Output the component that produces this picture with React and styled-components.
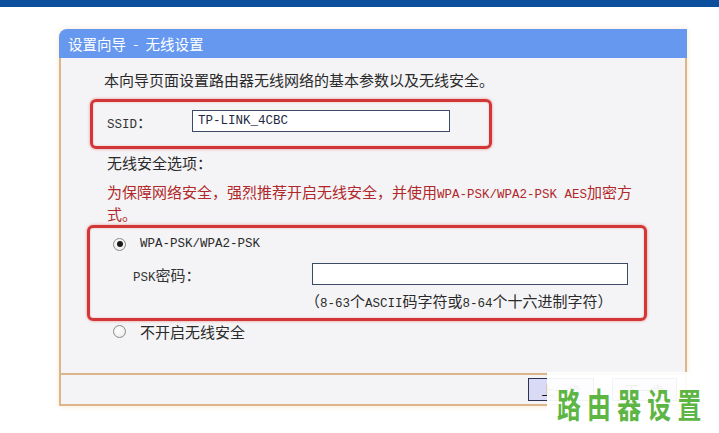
import React from "react";
import styled, { createGlobalStyle } from "styled-components";

const Global = createGlobalStyle`
  html, body { margin: 0; padding: 0; background: #ffffff; }
  body { font-family: "Noto Sans CJK SC", "Liberation Sans", sans-serif; }
`;

const Page = styled.div`
  position: relative;
  width: 719px;
  height: 433px;
  overflow: hidden;
  background: #ffffff;
`;

const TopBar = styled.div`
  height: 7px;
  background: #0c4f9c;
`;

const Panel = styled.div`
  margin: 22px 0 0 59px;
  width: 628px;
  box-shadow: 0 0 5px rgba(235, 195, 145, 0.45);
  border-top-left-radius: 8px;
`;

const Header = styled.div`
  height: 29px;
  display: flex;
  align-items: center;
  padding-left: 9px;
  background: #6698ef;
  color: #ffffff;
  font-size: 14.5px;
  border-top-left-radius: 8px;
  white-space: pre;
  word-spacing: 4px;
`;

const Body = styled.div`
  border-left: 2px solid #dcb58a;
  border-right: 2px solid #dcb58a;
  background: #f4f4f6;
  height: 315px;
  padding-top: 11px;
  box-sizing: border-box;
  color: #2a2a2a;
  font-size: 15px;
`;

const Asc = styled.span`
  font-family: "Liberation Mono", monospace;
  font-size: 12.5px;
  line-height: 1;
`;

const Line = styled.div`
  line-height: 22px;
  height: 22px;
  padding-left: ${(p) => p.$pl ?? 46}px;
  margin-top: ${(p) => p.$mt ?? 0}px;
  white-space: nowrap;
`;

const Warning = styled.div`
  line-height: 22px;
  margin: 7px 0 0 46px;
  width: 530px;
  color: #b0282a;
`;

const Highlight = styled.div`
  box-sizing: border-box;
  margin-left: ${(p) => p.$ml}px;
  margin-top: ${(p) => p.$mt}px;
  width: ${(p) => p.$w}px;
  border: 3px solid #d23636;
  border-radius: 6px;
  box-shadow: 0 0 3px rgba(215, 60, 60, 0.55), inset 0 0 2px rgba(215, 60, 60, 0.4);
  padding: ${(p) => p.$pad};
`;

const FieldRow = styled.div`
  display: flex;
  align-items: center;
  padding-left: ${(p) => p.$pl}px;
  margin-top: ${(p) => p.$mt ?? 0}px;
`;

const Label = styled.span`
  width: ${(p) => p.$w}px;
  flex: none;
  color: #333333;
`;

const TextBox = styled.div`
  box-sizing: border-box;
  width: ${(p) => p.$w}px;
  height: 22px;
  background: #ffffff;
  border: 1px solid #3d4a66;
  padding-left: 5px;
  display: flex;
  align-items: center;
  color: #1e2a44;
`;

const RadioRow = styled.div`
  display: flex;
  align-items: center;
  height: ${(p) => p.$h ?? 22}px;
  padding-left: ${(p) => p.$pl}px;
  margin-top: ${(p) => p.$mt ?? 0}px;
  gap: 14px;
`;

const Radio = styled.span`
  box-sizing: border-box;
  width: 13px;
  height: 13px;
  border-radius: 50%;
  border: 1px solid #8a8a8a;
  background: radial-gradient(circle at 40% 40%, #ffffff 0%, #e6e6e6 100%);
  display: flex;
  align-items: center;
  justify-content: center;
  flex: none;
  &::after {
    content: "";
    width: 6px;
    height: 6px;
    border-radius: 50%;
    background: ${(p) => (p.$checked ? "#1a1a1a" : "transparent")};
  }
`;

const Footer = styled.div`
  height: 29px;
  border: 2px solid #dcb58a;
  background: #f4f4f6;
  display: flex;
  align-items: center;
  justify-content: flex-end;
  gap: 18px;
  padding-right: 8px;
`;

const Button = styled.div`
  box-sizing: border-box;
  width: ${(p) => p.$w}px;
  height: 23px;
  border: 1px solid #2b3350;
  background: #d9dbf6;
  font-size: 13px;
  display: flex;
  align-items: center;
  justify-content: center;
  color: #111111;
`;

const Watermark = styled.div`
  position: absolute;
  left: 547px;
  top: 372px;
  right: 0;
  bottom: 0;
  background: rgba(255, 255, 255, 0.94);
  display: flex;
  align-items: center;
  padding-left: 10px;
`;

const MarkText = styled.span`
  display: inline-block;
  font-family: "Noto Sans CJK SC", sans-serif;
  font-weight: 700;
  font-size: 34px;
  line-height: 1;
  letter-spacing: 9px;
  color: #5db544;
  transform: scaleX(0.7);
  transform-origin: left center;
  white-space: nowrap;
  margin-top: 2px;
`;

export default function App() {
  return (
    <Page>
      <Global />
      <TopBar />
      <Panel>
        <Header>设置向导 - 无线设置</Header>
        <Body>
          <Line $pl={43}>本向导页面设置路由器无线网络的基本参数以及无线安全。</Line>
          <Highlight $ml={29} $mt={8} $w={402} $pad="8px 0 14px 0">
            <FieldRow $pl={14}>
              <Label $w={85}>
                <Asc>SSID</Asc>：
              </Label>
              <TextBox $w={258}>
                <Asc>TP-LINK_4CBC</Asc>
              </TextBox>
            </FieldRow>
          </Highlight>
          <Line $mt={3}>无线安全选项：</Line>
          <Warning>
            为保障网络安全，强烈推荐开启无线安全，并使用<Asc>WPA-PSK/WPA2-PSK AES</Asc>加密方式。
          </Warning>
          <Highlight $ml={26} $mt={0} $w={560} $pad="5px 0 6px 0">
            <RadioRow $pl={23}>
              <Radio $checked />
              <Asc>WPA-PSK/WPA2-PSK</Asc>
            </RadioRow>
            <FieldRow $pl={43} $mt={8}>
              <Label $w={179}>
                <Asc>PSK</Asc>密码：
              </Label>
              <TextBox $w={316} />
            </FieldRow>
            <Line $pl={215} $mt={5}>
              （<Asc>8-63</Asc>个<Asc>ASCII</Asc>码字符或<Asc>8-64</Asc>个十六进制字符）
            </Line>
          </Highlight>
          <RadioRow $pl={52} $h={20}>
            <Radio />
            <span>不开启无线安全</span>
          </RadioRow>
        </Body>
        <Footer>
          <Button $w={66}>上一步</Button>
          <Button $w={65}>下一步</Button>
        </Footer>
      </Panel>
      <Watermark>
        <MarkText>路由器设置</MarkText>
      </Watermark>
    </Page>
  );
}
